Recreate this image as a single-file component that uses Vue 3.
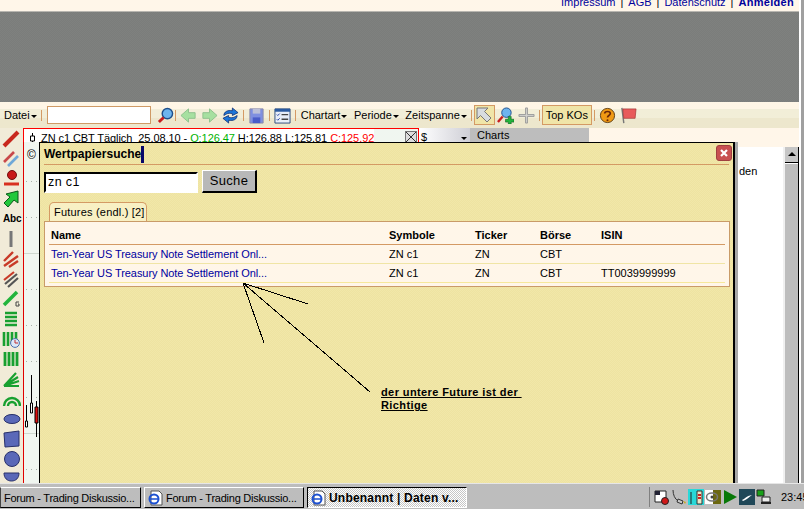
<script setup>
const tools = ['pencil', 'pencils', 'dot', 'arrow', 'abc', 'vline', 'hatch', 'hatch2', 'gline', 'hbars', 'clock', 'vbars', 'fan', 'arc', 'ellipse', 'square', 'circle', 'half']

const gridDots = [39, 75, 147, 183, 219, 255, 327]

const columns = ['Name', 'Symbole', 'Ticker', 'Börse', 'ISIN']
const rows = [
  { name: 'Ten-Year US Treasury Note Settlement Onl...', symbol: 'ZN c1', ticker: 'ZN', exchange: 'CBT', isin: '' },
  { name: 'Ten-Year US Treasury Note Settlement Onl...', symbol: 'ZN c1', ticker: 'ZN', exchange: 'CBT', isin: 'TT0039999999' },
]
</script>

<template>
  <div class="screen">
    <div class="main">
      <div class="page">
        <div class="toplinks">
          <a>Impressum</a><i>|</i><a>AGB</a><i>|</i><a>Datenschutz</a><i>|</i><a class="strong">Anmelden</a>
        </div>
        <div class="banner"></div>

        <div class="toolbar">
          <span class="menu">Datei<b class="caret"></b></span>
          <i class="sep"></i>
          <span class="search-box"></span>
          <svg class="ico loupe" viewBox="0 0 18 18"><circle cx="11" cy="7" r="5.500" fill="#6cb4ee" stroke="#1e4f8c" stroke-width="1.500"/><path d="M7 11 2 16" stroke="#c81e1e" stroke-width="3"/></svg>
          <i class="sep"></i>
          <svg class="ico" viewBox="0 0 18 18"><path d="M1 9 9 2v4h7v6H9v4z" fill="#a6e0a0" stroke="#8cc08c"/></svg>
          <svg class="ico" viewBox="0 0 18 18"><path d="M17 9 9 2v4H2v6h7v4z" fill="#a6e0a0" stroke="#8cc08c"/></svg>
          <svg class="ico" viewBox="0 0 18 18"><path d="M2 9c0-4 4-6 9-5V1l6 5-6 3V7C7 6 5 7 2 9zM16 9c0 4-4 6-9 5v3l-6-5 6-3v2c4 1 6 0 9-2z" fill="#1c76d8" stroke="#0a2a70" stroke-width=".8"/></svg>
          <i class="sep"></i>
          <svg class="ico" viewBox="0 0 18 18"><path d="M2 2h14v15H2z" fill="#7f8fe0" stroke="#8a8aa8"/><path d="M5 2h8v5H5z" fill="#bcc0d8"/><path d="M5 11h8v6H5z" fill="#4a5cc8"/></svg>
          <i class="sep"></i>
          <svg class="ico" viewBox="0 0 18 18"><path d="M1 2h16v15H1z" fill="#e8eef8" stroke="#2a4a7a"/><path d="M1 2h16v3H1z" fill="#2a5aa0"/><path d="M3 8l1 1 2-2M3 13l1 1 2-2" stroke="#1a3aa0" fill="none"/><path d="M8 8h7M8 13h7" stroke="#444" stroke-width="1.400"/></svg>
          <i class="sep wide"></i>
          <span class="menu">Chartart<b class="caret"></b></span>
          <span class="menu next">Periode<b class="caret"></b></span>
          <span class="menu next">Zeitspanne<b class="caret"></b></span>
          <i class="sep tight"></i>
          <span class="toggle cursor">
            <svg viewBox="0 0 18 18"><path d="M2 2h11L9.500 5.500 16 12l-4 4-6.500-6.500L2 13z" fill="#d8dce0" stroke="#777"/></svg>
          </span>
          <svg class="ico pull" viewBox="0 0 18 18"><circle cx="10" cy="6" r="5" fill="#6cb4ee" stroke="#1e4f8c"/><path d="M6 10 1 16" stroke="#c81e1e" stroke-width="2.500"/><path d="M12 10h3v3h3v3h-3v2h-3v-2H9v-3h3z" fill="#22b43c" stroke="#0a5a1a" stroke-width=".6"/></svg>
          <svg class="ico" viewBox="0 0 18 18"><path d="M8 1h2v7h7v2h-7v7H8v-7H1V8h7z" fill="#d4d4d0" stroke="#999"/></svg>
          <i class="sep"></i>
          <span class="toggle topkos pull">Top KOs</span>
          <i class="sep pull"></i>
          <svg class="ico" viewBox="0 0 18 18"><circle cx="9" cy="9" r="7.500" fill="#f09a14" stroke="#5a3a10"/><path d="M6 7c0-3 6-3 6 0 0 2-3 2-3 4" fill="none" stroke="#6a2808" stroke-width="1.800"/><circle cx="9" cy="14" r="1.100" fill="#6a2808"/></svg>
          <svg class="ico" viewBox="0 0 18 18"><path d="M2 1l2 16" stroke="#777" stroke-width="1.500"/><path d="M3 2h14l-1 10H4z" fill="#e85a5a" stroke="#a03030" stroke-width=".7"/></svg>
        </div>

        <div class="workspace">
          <div class="tools">
            <span v-for="tool in tools" :key="tool" class="tool">
              <svg viewBox="0 0 20 20">
                <template v-if="tool === 'pencil'"><path d="M3 17 17 3" stroke="#c8281e" stroke-width="4"/></template>
                <template v-else-if="tool === 'pencils'"><path d="M3 13 13 3" stroke="#c8484a" stroke-width="2.600"/><path d="M7 17 17 7" stroke="#70a8d8" stroke-width="2.600"/></template>
                <template v-else-if="tool === 'dot'"><circle cx="11" cy="6" r="4.500" fill="#c81818" stroke="#701010"/><path d="M3 15h15" stroke="#d83020" stroke-width="3"/></template>
                <template v-else-if="tool === 'arrow'"><path d="M17 2v12l-4-3-6 7-4-4 6-6-4-3z" fill="#22c83c" stroke="#0a5a1a"/></template>
                <template v-else-if="tool === 'vline'"><path d="M10 2v16" stroke="#777" stroke-width="3"/></template>
                <template v-else-if="tool === 'hatch'"><path d="M3 12 12 3M3 17 17 7M8 18 17 12" stroke="#c83a28" stroke-width="2.400"/></template>
                <template v-else-if="tool === 'hatch2'"><path d="M3 11 13 3" stroke="#c83a28" stroke-width="2.200"/><path d="M4 15 16 5M7 18 17 9" stroke="#555" stroke-width="2.200"/></template>
                <template v-else-if="tool === 'gline'"><path d="M3 16 16 3" stroke="#22b43c" stroke-width="3.600"/><path d="M18 13h-3v4h3v-2h-1" fill="none" stroke="#444"/></template>
                <template v-else-if="tool === 'hbars'"><path d="M4 4h12M4 8h12M4 12h12M4 16h12" stroke="#18a030" stroke-width="2.600"/></template>
                <template v-else-if="tool === 'clock'"><path d="M3 3v14M7 3v14M11 3v12M15 3v8" stroke="#18a030" stroke-width="2.600"/><circle cx="14" cy="14" r="4.400" fill="#dce8f8" stroke="#4a70b0"/><path d="M14 11v3h3" fill="none" stroke="#c03030"/></template>
                <template v-else-if="tool === 'vbars'"><path d="M4 3v14M8 3v14M12 3v14M16 3v14" stroke="#18a030" stroke-width="2.800"/></template>
                <template v-else-if="tool === 'fan'"><path d="M3 17 15 4M3 17 17 8M3 17 18 12M3 17h15" stroke="#18a030" stroke-width="2.200"/></template>
                <template v-else-if="tool === 'arc'"><path d="M3 17a8 8 0 0 1 16 0M7 17a4 4 0 0 1 8 0" fill="none" stroke="#18a030" stroke-width="2.400"/></template>
                <template v-else-if="tool === 'ellipse'"><ellipse cx="11" cy="10" rx="8" ry="4.500" fill="#5a68b8" stroke="#28306a"/></template>
                <template v-else-if="tool === 'square'"><path d="M3 4 18 2v15L4 18z" fill="#5a68b8" stroke="#28306a"/></template>
                <template v-else-if="tool === 'circle'"><circle cx="11" cy="10" r="7.500" fill="#5a68b8" stroke="#28306a"/></template>
                <template v-else-if="tool === 'half'"><path d="M3 4h15c0 5-3 8-7.500 8S3 9 3 4z" fill="#5a68b8" stroke="#28306a"/></template>
              </svg>
              <b v-if="tool === 'abc'" class="abc">Abc</b>
            </span>
          </div>

          <div class="chart-area">
            <div class="chart-head">
              <div class="quote">
                <svg class="candle" viewBox="0 0 7 11"><path d="M3.500 0v11" stroke="#000"/><path d="M1.500 3h4v5h-4z" fill="#fff" stroke="#000"/></svg>
                <span>ZN c1 CBT Täglich&nbsp; 25.08.10 - <em class="up">O:126.47</em> H:126.88 L:125.81 <em class="down">C:125.92</em></span>
              </div>
              <span class="chart-close"></span>
            </div>
            <div class="currency">$<b class="caret"></b></div>
            <div class="charts-tab">Charts</div>
            <div class="head-rest"></div>

            <div class="chart-body">
              <i v-for="top in gridDots" :key="top" class="grid-dots" :style="{ top: top + 'px' }"></i>
              <span class="copyright">©</span>
              <svg class="candles" viewBox="0 0 15 65">
                <path d="M2.500 30v22M7.500 0v38M12.500 26v36" stroke="#000"/>
                <path d="M1.500 46h2v6h-2zM6.500 28h2v10h-2z" fill="#fff" stroke="#000"/>
                <path d="M11 32h3v16h-3z" fill="#e01010" stroke="#000"/>
              </svg>
            </div>
            <div class="side">
              <span class="side-text">den</span>
              <div class="scrollbar">
                <span class="scroll-up"></span>
              </div>
            </div>

            <div class="dialog">
              <div class="dialog-head">
                <span class="dialog-title">Wertpapiersuche</span><i class="cursor-mark"></i>
                <span class="dialog-close">
                  <svg viewBox="0 0 10 10"><path d="M2 2 8 8M8 2 2 8" stroke="#fff" stroke-width="2.200"/></svg>
                </span>
              </div>
              <div class="search-row">
                <span class="search-input">zn c1</span>
                <span class="search-btn">Suche</span>
              </div>
              <div class="tab">Futures (endl.) [2]</div>
              <div class="results">
                <div class="result-row header">
                  <span v-for="col in columns" :key="col">{{ col }}</span>
                </div>
                <div v-for="(row, i) in rows" :key="i" class="result-row" :class="{ last: i === rows.length - 1 }">
                  <span class="link">{{ row.name }}</span>
                  <span>{{ row.symbol }}</span>
                  <span>{{ row.ticker }}</span>
                  <span>{{ row.exchange }}</span>
                  <span>{{ row.isin }}</span>
                </div>
              </div>
              <p class="note">der untere Future ist der&nbsp;<br>Richtige</p>
            </div>

            <svg class="marks" viewBox="0 0 804 525">
              <path d="M243 283 308 304M243 283 264 343M243 283 370 392" stroke="#000" fill="none"/>
            </svg>
          </div>
        </div>
      </div>
      <div class="edge"></div>
    </div>

    <div class="taskbar">
      <span class="task first">Forum - Trading Diskussio...</span>
      <span class="task">
        <svg class="ie" viewBox="0 0 16 16"><path d="M3 1h8l3 3v11H3z" fill="#fff" stroke="#555"/><circle cx="6" cy="9" r="4.500" fill="none" stroke="#1c50d0" stroke-width="2"/><path d="M1 9h10" stroke="#1c50d0" stroke-width="1.500"/></svg>
        Forum - Trading Diskussio...
      </span>
      <span class="task active">
        <svg class="ie" viewBox="0 0 16 16"><path d="M3 1h8l3 3v11H3z" fill="#fff" stroke="#555"/><circle cx="6" cy="9" r="4.500" fill="none" stroke="#1c50d0" stroke-width="2"/><path d="M1 9h10" stroke="#1c50d0" stroke-width="1.500"/></svg>
        Unbenannt | Daten v...
      </span>
      <div class="tray">
        <svg viewBox="0 0 16 16"><path d="M1 2h11v11H1z" fill="#fff" stroke="#222"/><path d="M1 2h5v4H1z" fill="#223"/><circle cx="11" cy="12" r="3.500" fill="#d01818" stroke="#222"/></svg>
        <svg viewBox="0 0 16 16"><path d="M2 1c0 5 2 9 5 11l5 2" fill="none" stroke="#333"/><path d="M7 10l5 2-1 3-5-2z" fill="#c8c8c8" stroke="#333"/><path d="M12 12l3 1-1 2z" fill="#c8a820"/></svg>
        <svg viewBox="0 0 16 16"><path d="M0 0h16v16H0z" fill="#28d8d8"/><path d="M9 2h5v13H9z" fill="#e8e8c8" stroke="#333"/><path d="M10 6h3M10 9h3" stroke="#d02020" stroke-width="2"/><path d="M3 3v12" stroke="#222"/></svg>
        <svg viewBox="0 0 16 16"><path d="M0 1h16v14H0z" fill="#6c6810"/><path d="M0 1h8v14H0z" fill="#fff"/><ellipse cx="7" cy="8" rx="5.500" ry="4" fill="none" stroke="#777" stroke-width="1.500"/><circle cx="7" cy="8" r="1.500" fill="#444"/></svg>
        <svg viewBox="0 0 16 16"><path d="M2 1v14l13-7z" fill="#087808"/></svg>
        <svg viewBox="0 0 16 16"><path d="M0 0h16v16H0z" fill="#204858"/><path d="M3 11c3-1 4-4 10-5-3 2-4 4-9 6z" fill="#fff"/></svg>
        <svg viewBox="0 0 16 16"><path d="M1 1h7v6H1z" fill="#18a018" stroke="#222"/><path d="M6 8h8v5H6z" fill="#eee" stroke="#222"/><path d="M5 14h10" stroke="#222" stroke-width="2"/></svg>
        <span class="clock">23:45</span>
      </div>
    </div>
    <div class="bottom"></div>
  </div>
</template>

<style scoped>
.screen {
  width: 804px;
  height: 525px;
  overflow: hidden;
  display: flex;
  flex-direction: column;
  font-family: "Liberation Sans", Arial, sans-serif;
  font-size: 11px;
  color: #000;
  background: #fff;
}

.main {
  height: 483px;
  flex: none;
  display: flex;
}

.page {
  width: 799px;
  flex: none;
  display: flex;
  flex-direction: column;
}

.edge {
  flex: 1;
  background: linear-gradient(90deg, #fff 0 2px, #a0a0a0 2px);
}

.toplinks {
  height: 11px;
  flex: none;
  display: flex;
  justify-content: flex-end;
  gap: 5px;
  padding-right: 5px;
  background: #fff6e9;
  color: #00009c;
  line-height: 4px;
  font-size: 11px;
  overflow: hidden;
}

.toplinks i {
  font-style: normal;
  color: #000;
}

.toplinks .strong {
  font-weight: 700;
  letter-spacing: 0.3px;
}

.banner {
  height: 91px;
  flex: none;
  background: repeating-conic-gradient(#7b7d7b 0 25%, #7f817f 0 50%) 0 0 / 2px 2px;
  border-top: 1px solid #b8b6b0;
  box-sizing: border-box;
}

.toolbar {
  height: 26px;
  flex: none;
  display: flex;
  align-items: center;
  gap: 4px;
  padding-left: 4px;
  background: linear-gradient(#fff6e6 0 27%, #f2eed8 27% 60%, #ede7cd 60% 100%);
}

.menu {
  font-size: 11px;
  white-space: nowrap;
  display: flex;
  align-items: center;
  gap: 1px;
}

.menu.next {
  margin-left: 2.500px;
}

.caret {
  display: inline-block;
  width: 0;
  height: 0;
  margin-top: 2px;
  border-style: solid;
  border-color: #000 transparent transparent;
  border-width: 3px 3.500px 0;
}

.sep {
  width: 1px;
  height: 11px;
  background: #d49a64;
  flex: none;
}

.sep.tight {
  margin-right: -2px;
}

.sep.wide {
  margin-right: 1px;
}

.pull {
  margin-left: -2px;
}

.search-box {
  width: 102px;
  height: 16px;
  margin-left: 1px;
  background: #fff;
  border: 1px solid #cf9a65;
  flex: none;
}

.ico {
  width: 17px;
  height: 17px;
  flex: none;
}

.loupe {
  margin-left: 2px;
  margin-right: -3px;
}

.toggle {
  display: flex;
  align-items: center;
  justify-content: center;
  box-sizing: border-box;
  border: 1px solid #d49a64;
  background: #f0e5a8;
  flex: none;
}

.cursor {
  width: 21px;
  height: 20px;
}

.cursor svg {
  width: 18px;
  height: 18px;
}

.topkos {
  width: 50px;
  height: 20px;
  font-size: 11px;
}

.workspace {
  height: 355px;
  flex: none;
  display: flex;
}

.tools {
  width: 23px;
  flex: none;
  padding-top: 1px;
  background: #f1ebd8;
  overflow: hidden;
}

.tool {
  position: relative;
  display: block;
  width: 22px;
  height: 20px;
}

.tool svg {
  display: block;
  width: 20px;
  height: 20px;
  margin-left: 1px;
}

.abc {
  position: absolute;
  left: 3px;
  top: 4px;
  font-size: 10px;
  letter-spacing: -0.2px;
}

.chart-area {
  position: relative;
  flex: 1;
  display: grid;
  grid-template-columns: 396px 51px 119px 1fr;
  grid-template-rows: 14px 1fr;
  background: #fff6e9;
}

.chart-head {
  display: flex;
  justify-content: space-between;
  border: 1px solid #f00;
  border-width: 1px 1px 0;
  background: #f0f6f0;
  padding-right: 1px;
  overflow: hidden;
}

.quote {
  display: flex;
  gap: 5px;
  padding-left: 5px;
  background: #fff;
  line-height: 19px;
  height: 20px;
  font-size: 11px;
  letter-spacing: -0.07px;
  white-space: nowrap;
}

.candle {
  width: 7px;
  height: 11px;
  margin-top: 4px;
}

.up {
  font-style: normal;
  color: #00b400;
}

.down {
  font-style: normal;
  color: #f00;
}

.chart-close {
  width: 10px;
  height: 10px;
  margin-top: 2px;
  border: 1px solid #777;
  background: linear-gradient(45deg, transparent 46%, #333 46% 54%, transparent 54%), linear-gradient(-45deg, #ddd 46%, #333 46% 54%, #ddd 54%);
}

.currency {
  display: flex;
  justify-content: space-between;
  align-items: center;
  padding: 4px 3px 0 2px;
  background: linear-gradient(90deg, #fff, #cfcfd6);
}

.charts-tab {
  background: #bdbdbd;
  padding-left: 7px;
  line-height: 14px;
  font-size: 11px;
}

.chart-body {
  grid-column: 1;
  position: relative;
  border-left: 1px solid #e00000;
  background: #f0f6f0;
  background-image: linear-gradient(#cfd8cf 0 1px, transparent 1px);
  background-size: 100% 180px;
  background-position: 0 111px;
}

.grid-dots {
  position: absolute;
  left: 2px;
  width: 12px;
  height: 1px;
  background: repeating-linear-gradient(90deg, #a8b0a8 0 1px, transparent 1px 5px);
}

.copyright {
  position: absolute;
  left: 3px;
  top: 6px;
  font-size: 12px;
}

.candles {
  position: absolute;
  left: 0;
  top: 233px;
  width: 15px;
  height: 65px;
}

.side {
  grid-column: 2 / 5;
  position: relative;
  display: flex;
  justify-content: flex-end;
  margin-top: 5px;
  background: #fff;
  border-right: 1px solid #000;
}

.side-text {
  position: absolute;
  left: 320px;
  top: 18px;
  font-size: 11px;
}

.scrollbar {
  width: 15px;
  box-sizing: border-box;
  background: #bdbdbd;
  border-left: 2px solid #f0f0f0;
}

.scroll-up {
  position: relative;
  display: block;
  height: 16px;
  box-sizing: border-box;
  background: #c6c6c6;
  border-bottom: 1px solid #000;
  box-shadow: 0 1px 0 #fff;
}

.scroll-up::after {
  content: "";
  position: absolute;
  left: 3px;
  top: 5px;
  border-style: solid;
  border-color: transparent transparent #000;
  border-width: 0 4px 4px;
}

.dialog {
  position: absolute;
  left: 16px;
  top: 14px;
  width: 696px;
  height: 341px;
  box-sizing: border-box;
  background: repeating-conic-gradient(#f1e7a9 0 25%, #eee3a1 0 50%) 0 0 / 2px 2px;
  border: 1px solid #000;
  border-right-width: 2px;
  border-bottom: 0;
  box-shadow: 3px 0 0 #a8a8a8;
}

.dialog-head {
  position: relative;
  height: 21px;
  margin: 0 4px;
  display: flex;
  align-items: center;
  border-bottom: 1px solid #d49a64;
}

.dialog-title {
  font-size: 12px;
  font-weight: 700;
}

.cursor-mark {
  width: 3px;
  height: 17px;
  background: #08086a;
  margin-top: 1px;
}

.dialog-close {
  position: absolute;
  right: -3px;
  top: 2px;
  width: 16px;
  height: 16px;
  border-radius: 3px;
  background: #c85050;
  border: 1px solid #a04040;
  box-sizing: border-box;
  padding: 2px;
}

.dialog-close svg {
  display: block;
}

.search-row {
  display: flex;
  align-items: flex-end;
  gap: 4px;
  margin: 5px 0 0 4px;
}

.search-input {
  width: 154px;
  height: 21px;
  box-sizing: border-box;
  border: 2px solid #000;
  border-right-color: #fff;
  border-bottom-color: #fff;
  background: #fff;
  padding-left: 2px;
  font-size: 12.500px;
  line-height: 17px;
  letter-spacing: 0.4px;
}

.search-btn {
  width: 55px;
  height: 23px;
  box-sizing: border-box;
  background: #b8b8b8;
  border: 1px solid #000;
  border-left-color: #fff;
  border-top-color: #fff;
  border-right-width: 2px;
  border-bottom-width: 2px;
  text-align: center;
  font-size: 13px;
  line-height: 20px;
  letter-spacing: 0.3px;
}

.tab {
  width: 98px;
  height: 19px;
  margin: 9px 0 0 9px;
  box-sizing: border-box;
  border: 1px solid #d49a64;
  border-bottom: 0;
  border-radius: 5px 5px 0 0;
  background: #f8f0c4;
  padding-left: 4px;
  line-height: 19px;
  font-size: 11px;
  letter-spacing: 0.2px;
}

.results {
  width: 686px;
  margin-left: 4px;
  height: 66px;
  box-sizing: border-box;
  padding: 0 4px;
  border: 1px solid #c99b68;
  background: #fff6e9;
}

.result-row {
  display: grid;
  grid-template-columns: 338px 86px 65px 61px 1fr;
  height: 19px;
  padding-left: 2px;
  align-items: center;
  box-sizing: border-box;
  border-bottom: 1px solid #f0e5a5;
  white-space: nowrap;
}

.result-row.header {
  height: 23px;
  padding-top: 3px;
  font-weight: 700;
  border-bottom-color: #d49a64;
}

.result-row.last {
  border-bottom-color: #f6e89a;
}

.link {
  color: #0000a0;
  letter-spacing: -0.07px;
}

.note {
  position: absolute;
  left: 341px;
  top: 243px;
  margin: 0;
  font-size: 11px;
  font-weight: 700;
  line-height: 13px;
  text-decoration: underline;
  letter-spacing: 0.4px;
}

.marks {
  position: absolute;
  left: -23px;
  top: -128px;
  width: 804px;
  height: 525px;
  pointer-events: none;
  shape-rendering: crispEdges;
}

.taskbar {
  height: 26px;
  flex: none;
  position: relative;
  display: flex;
  gap: 3px;
  padding: 3px 0 0;
  box-sizing: border-box;
  background: #bdbdbd;
  border-top: 1px solid #e6e6e6;
}

.task {
  width: 160px;
  height: 21px;
  box-sizing: border-box;
  display: flex;
  align-items: center;
  gap: 2px;
  padding-left: 3px;
  background: #bdbdbd;
  border: 1px solid #000;
  border-top-color: #fff;
  border-left-color: #fff;
  font-size: 11px;
  letter-spacing: -0.25px;
  white-space: nowrap;
  overflow: hidden;
}

.task.first {
  width: 141px;
  padding-left: 3px;
  border-left-color: #444;
}

.task.active {
  font-size: 12px;
  font-weight: 700;
  letter-spacing: 0.2px;
  border: 1px solid #fff;
  border-top-color: #000;
  border-left-color: #000;
  background: repeating-conic-gradient(#fff 0 25%, #c6c6c6 0 50%) 0 0 / 2px 2px;
}

.ie {
  width: 16px;
  height: 16px;
  flex: none;
}

.tray {
  position: absolute;
  left: 649px;
  top: 3px;
  right: 0;
  height: 20px;
  display: flex;
  align-items: center;
  gap: 1px;
  padding-left: 4px;
  border-left: 1px solid #808080;
}

.tray svg {
  width: 16px;
  height: 16px;
  flex: none;
}

.clock {
  margin-left: 8px;
  font-size: 11px;
  white-space: nowrap;
}

.bottom {
  flex: 1;
  background: #fff;
}
</style>
